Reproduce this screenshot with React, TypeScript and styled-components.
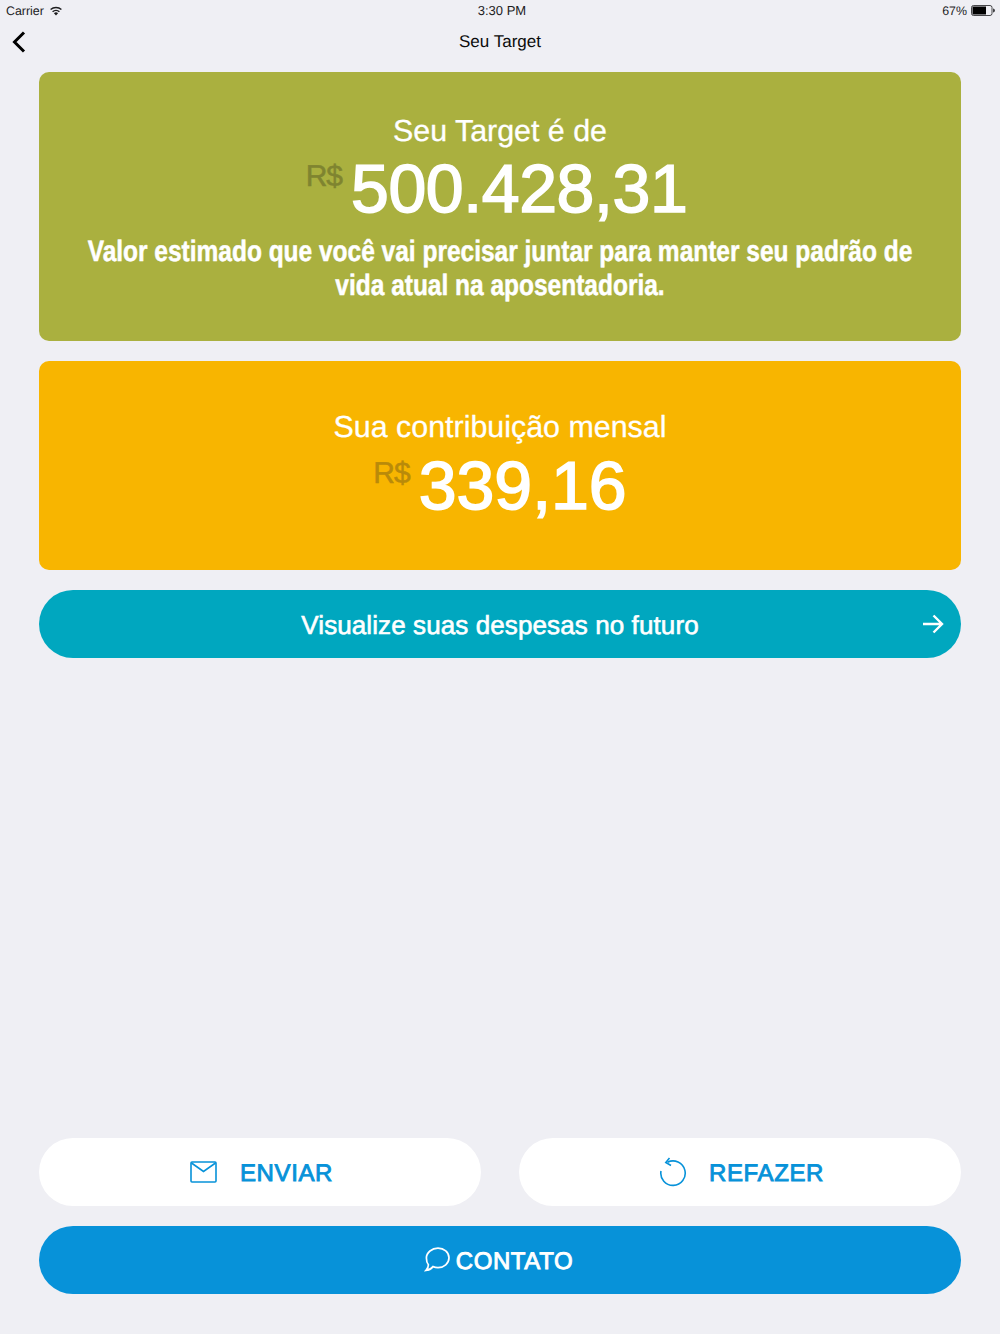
import styled, { createGlobalStyle } from "styled-components";

const GlobalStyle = createGlobalStyle`
  html, body {
    margin: 0;
    padding: 0;
    background: #efeff4;
  }
  body {
    font-family: "Liberation Sans", Arial, sans-serif;
    text-rendering: geometricPrecision;
  }
`;

const Page = styled.div`
  width: 1000px;
  height: 1334px;
  display: flex;
  flex-direction: column;
  overflow: hidden;
  background: #efeff4;
`;

const StatusBar = styled.div`
  height: 20px;
  flex-shrink: 0;
  padding: 1px 5px 0 6px;
  box-sizing: border-box;
  display: grid;
  grid-template-columns: 1fr auto 1fr;
  align-items: center;
  font-size: 12.4px;
  color: #1d1d1f;
`;

const StatusLeft = styled.div`
  display: flex;
  align-items: center;
  gap: 5px;
`;

const StatusRight = styled.div`
  display: flex;
  align-items: center;
  justify-content: flex-end;
  gap: 4px;
`;

const Clock = styled.div`
  font-size: 13px;
  padding-left: 3px;
`;

const NavBar = styled.div`
  height: 44px;
  flex-shrink: 0;
  position: relative;
  display: flex;
  align-items: center;
  justify-content: center;
  font-size: 17px;
  color: #0c0c0c;
`;

const BackButton = styled.div`
  position: absolute;
  left: 12px;
  top: 11px;
  display: flex;
`;

const Content = styled.div`
  flex: 1;
  padding: 8px 39px 40px;
  display: flex;
  flex-direction: column;
  gap: 20px;
`;

const Card = styled.div<{ $bg: string; $h: number; $top: number }>`
  height: ${(p) => p.$h}px;
  padding-top: ${(p) => p.$top}px;
  box-sizing: border-box;
  background: ${(p) => p.$bg};
  border-radius: 10px;
  display: flex;
  flex-direction: column;
  align-items: center;
  color: #fff;
`;

const CardTitle = styled.div`
  font-size: 30.4px;
  line-height: 34px;
  -webkit-text-stroke: 0.3px #fff;
`;

const AmountRow = styled.div<{ $shift?: number; $top: number }>`
  display: flex;
  align-items: flex-start;
  gap: 9px;
  margin-top: ${(p) => p.$top}px;
  margin-right: ${(p) => p.$shift ?? 0}px;
`;

const Currency = styled.span<{ $color: string }>`
  font-size: 30px;
  line-height: 34px;
  margin-top: 11px;
  letter-spacing: -1px;
  color: ${(p) => p.$color};
  -webkit-text-stroke: 0.5px ${(p) => p.$color};
`;

const Amount = styled.span<{ $tight?: boolean }>`
  font-size: 68px;
  line-height: 80px;
  letter-spacing: ${(p) => (p.$tight ? "-0.4px" : "0")};
  -webkit-text-stroke: 1.6px #fff;
`;

const Note = styled.div`
  margin-top: 6px;
  width: 1040px;
  flex-shrink: 0;
  text-align: center;
  font-weight: 700;
  font-size: 29.5px;
  line-height: 34px;
  transform: scaleX(0.83);
  -webkit-text-stroke: 0.5px #fff;
`;

const ForwardButton = styled.div`
  height: 68px;
  padding-top: 2px;
  box-sizing: border-box;
  position: relative;
  border-radius: 34px;
  background: #00a7bf;
  color: #fff;
  font-size: 26px;
  letter-spacing: 0.1px;
  display: flex;
  align-items: center;
  justify-content: center;
  -webkit-text-stroke: 0.6px #fff;
`;

const ArrowWrap = styled.span`
  position: absolute;
  right: 17px;
  top: 24px;
  display: flex;
`;

const Footer = styled.div`
  margin-top: auto;
  display: flex;
  flex-direction: column;
  gap: 20px;
`;

const FooterRow = styled.div`
  display: grid;
  grid-template-columns: 1fr 1fr;
  gap: 38px;
`;

const PillButton = styled.div<{ $primary?: boolean; $gap: number; $offset: number }>`
  height: 68px;
  box-sizing: border-box;
  padding-top: 3px;
  padding-left: ${(p) => Math.max(p.$offset, 0)}px;
  padding-right: ${(p) => Math.max(-p.$offset, 0)}px;
  border-radius: 34px;
  background: ${(p) => (p.$primary ? "#0792d9" : "#fff")};
  color: ${(p) => (p.$primary ? "#fff" : "#0792d9")};
  display: flex;
  align-items: center;
  justify-content: center;
  gap: ${(p) => p.$gap}px;
  font-size: 24px;
  letter-spacing: 0.6px;
  -webkit-text-stroke: 0.9px ${(p) => (p.$primary ? "#fff" : "#0792d9")};
`;

const IconBox = styled.span`
  display: flex;
  margin-top: -3px;
`;

function WifiIcon() {
  return (
    <svg width="14" height="10" viewBox="0 0 14 10">
      <path d="M7 9.600 4.900 7.200a3 3 0 0 1 4.200 0z" fill="#1d1d1f" />
      <path d="M3.600 5.800a5 5 0 0 1 6.800 0M1.600 3.600a8 8 0 0 1 10.800 0" fill="none" stroke="#1d1d1f" strokeWidth="1.400" />
    </svg>
  );
}

function BatteryIcon() {
  return (
    <svg width="24" height="11" viewBox="0 0 24 11">
      <rect x="0.500" y="0.500" width="20.500" height="10" rx="2" fill="none" stroke="#1d1d1f" strokeWidth="0.800" />
      <rect x="1.500" y="1.500" width="13.500" height="8" fill="#000" />
      <path d="M22.200 3.500c1 .2 1.600 1 1.600 2s-.6 1.800-1.600 2z" fill="#1d1d1f" />
    </svg>
  );
}

function MailIcon() {
  return (
    <svg width="27" height="22" viewBox="0 0 27 22" fill="none" stroke="#0792d9" strokeWidth="1.600">
      <rect x="1" y="1" width="25" height="20" rx="1" />
      <path d="M1.500 2 13.500 10.500 25.500 2" />
    </svg>
  );
}

function RedoIcon() {
  return (
    <svg width="28" height="30" viewBox="0 0 28 30" fill="none" stroke="#0792d9" strokeWidth="1.600">
      <path d="M8.500 5.300A12.200 12.200 0 1 1 2 14" />
      <path d="M10.500 1 6.800 5.500l5.200 3" />
    </svg>
  );
}

function ChatIcon() {
  return (
    <svg width="26" height="26" viewBox="0 0 26 26" fill="none" stroke="#fff" strokeWidth="1.700">
      <path d="M14 1.200c6 0 11 4 11 9.600s-5 9.800-11 9.800c-1.800 0-3.600-.4-5-1-1.600 2-4 3.600-7 3.800 1.600-1.600 2.400-3.400 2.400-5.600C2.800 15.900 2.400 13.400 2.400 11 2.400 5.400 8 1.200 14 1.200z" />
    </svg>
  );
}

export default function App() {
  return (
    <>
      <GlobalStyle />
      <Page>
        <StatusBar>
          <StatusLeft>
            Carrier
            <WifiIcon />
          </StatusLeft>
          <Clock>3:30 PM</Clock>
          <StatusRight>
            67%
            <BatteryIcon />
          </StatusRight>
        </StatusBar>
        <NavBar>
          <BackButton>
            <svg width="14" height="22" viewBox="0 0 14 22" fill="none" stroke="#000" strokeWidth="3">
              <path d="M12 1.500 2.500 11 12 20.500" />
            </svg>
          </BackButton>
          Seu Target
        </NavBar>
        <Content>
          <Card $bg="#aab03f" $h={269} $top={42}>
            <CardTitle>Seu Target é de</CardTitle>
            <AmountRow $shift={7} $top={1}>
              <Currency $color="#7f8430">R$</Currency>
              <Amount $tight>500.428,31</Amount>
            </AmountRow>
            <Note>Valor estimado que você vai precisar juntar para manter seu padrão de vida atual na aposentadoria.</Note>
          </Card>
          <Card $bg="#f8b500" $h={209} $top={49}>
            <CardTitle>Sua contribuição mensal</CardTitle>
            <AmountRow $top={2}>
              <Currency $color="#b98a0a">R$</Currency>
              <Amount>339,16</Amount>
            </AmountRow>
          </Card>
          <ForwardButton>
            Visualize suas despesas no futuro
            <ArrowWrap>
              <svg width="22" height="20" viewBox="0 0 22 20" fill="none" stroke="#fff" strokeWidth="2.400">
                <path d="M1 10h19M11.500 1.500 20 10l-8.500 8.500" />
              </svg>
            </ArrowWrap>
          </ForwardButton>
          <Footer>
            <FooterRow>
              <PillButton $gap={23} $offset={3}>
                <IconBox>
                  <MailIcon />
                </IconBox>
                ENVIAR
              </PillButton>
              <PillButton $gap={22} $offset={3}>
                <IconBox>
                  <RedoIcon />
                </IconBox>
                REFAZER
              </PillButton>
            </FooterRow>
            <PillButton $primary $gap={6} $offset={-3}>
              <IconBox>
                <ChatIcon />
              </IconBox>
              CONTATO
            </PillButton>
          </Footer>
        </Content>
      </Page>
    </>
  );
}
